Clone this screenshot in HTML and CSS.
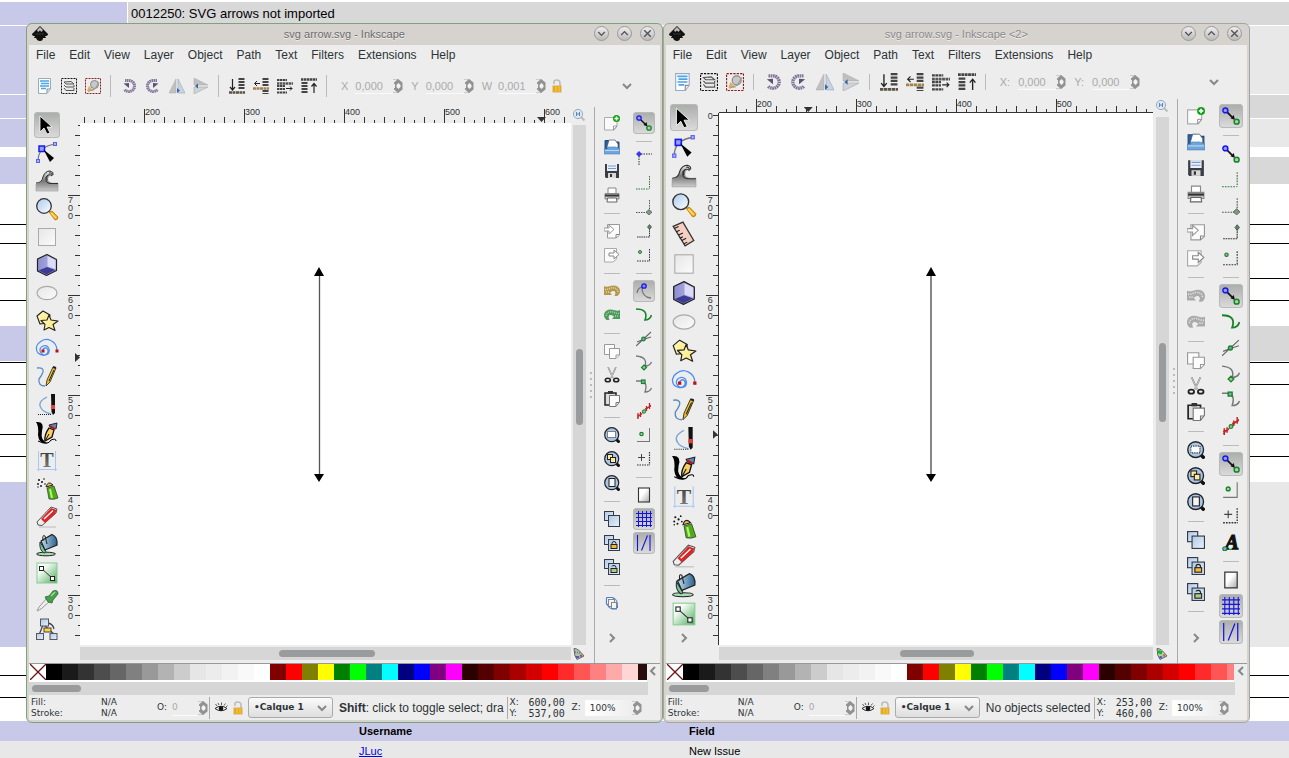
FILE: index.html
```html
<!DOCTYPE html>
<html lang="en">
<head>
<meta charset="utf-8">
<title>svg arrow.svg - Inkscape</title>
<link rel="stylesheet" href="styles.css">
</head>
<body>
<svg class="sprite" aria-hidden="true">
  <defs>
    <linearGradient id="g-paper" x1="0" y1="0" x2="1" y2="1"><stop offset="0" stop-color="#e6e6e6"/><stop offset="1" stop-color="#fbfbfb"/></linearGradient>
    <linearGradient id="g-page" x1="0" y1="0" x2="1" y2="1"><stop offset="0" stop-color="#fff"/><stop offset=".4" stop-color="#fff"/><stop offset="1" stop-color="#aaa"/></linearGradient>
    <linearGradient id="g-lens" x1="0" y1="0" x2="1" y2="1"><stop offset="0" stop-color="#a8c8f0"/><stop offset="1" stop-color="#fff"/></linearGradient>
    <linearGradient id="g-blue" x1="0" y1="0" x2="1" y2="1"><stop offset="0" stop-color="#b0c8e4"/><stop offset="1" stop-color="#e8f2fc"/></linearGradient>
    <linearGradient id="g-green" x1="0" y1="0" x2="1" y2="1"><stop offset="0" stop-color="#fff"/><stop offset=".3" stop-color="#f4fbf4"/><stop offset="1" stop-color="#4cab5c"/></linearGradient>
    <linearGradient id="g-wave" x1="0" y1="0" x2="0" y2="1"><stop offset="0" stop-color="#eee"/><stop offset=".5" stop-color="#777"/><stop offset="1" stop-color="#ccc"/></linearGradient>
    <linearGradient id="g-yellow" x1="0" y1="0" x2="1" y2="1"><stop offset="0" stop-color="#fffbd0"/><stop offset="1" stop-color="#ffe668"/></linearGradient>
    <linearGradient id="g-bucket" x1="0" y1="0" x2="1" y2="0"><stop offset="0" stop-color="#c4dcec"/><stop offset="1" stop-color="#2a6090"/></linearGradient>
    <linearGradient id="g-box" x1="0" y1="0" x2="1" y2="0"><stop offset="0" stop-color="#8e8ed0"/><stop offset="1" stop-color="#b4b4e4"/></linearGradient>
    <linearGradient id="g-T" x1="0" y1="0" x2="0" y2="1"><stop offset="0" stop-color="#333"/><stop offset="1" stop-color="#888"/></linearGradient>
  </defs>

  <symbol id="logo" viewBox="0 0 16 16"><path d="M8 0 L16 8 Q16 10 13 10 L14 12 L11 12 Q11 15 8 15 Q5 15 4 12 L2 12 L3 10 Q0 10 0 8Z" fill="#111"/><path d="M8 1 L11 4 L9.500 6 L8 4.500 L6 6 L5 4Z" fill="#bbb"/><path d="M4 8H12" stroke="#333"/></symbol>

  <symbol id="select" viewBox="0 0 24 24"><path d="M5 3 L5 19 L9 15 L12 21 L15 20 L12 14 L17 14Z" fill="#000" stroke="#fff" stroke-width=".8"/></symbol>
  <symbol id="node" viewBox="0 0 24 24"><path d="M3 20 Q3 5 21 3" fill="none" stroke="#777" stroke-width="1.200"/><g fill="#aab4ff" stroke="#5560ee"><rect x="1.500" y="18.500" width="3" height="3"/><rect x="18.500" y="1.500" width="3" height="3"/></g><rect x="4" y="5" width="5.500" height="5.500" fill="#8fa2ff" stroke="#1a1aee" stroke-width="1.500"/><path d="M8.500 8.500 L19 17 L15 21Z" fill="#000"/></symbol>
  <symbol id="tweak" viewBox="0 0 24 24"><path d="M1 22 V15 Q7 14 8 8 Q10 2 15 2 Q19 3 18 6 Q17 5 15 6 Q11 10 14 13 Q17 15 23 14 V22Z" fill="url(#g-wave)" stroke="#999" stroke-width=".6"/><path d="M1 14 Q7 14 8 8 Q10 2 15 2 Q19 3 18 6 M14 4 Q17 3 17 7 M17 7 Q14 4 11 8 Q10 14 15 14.500 H23 M13 6 Q11 8 12 11" fill="none" stroke="#333" stroke-width="1"/></symbol>
  <symbol id="zoom" viewBox="0 0 24 24"><path d="M14 15 L17 14 L23 20 Q23 23 20 23Z" fill="#f5a800" stroke="#b07010" stroke-width=".7"/><path d="M16 16L21 21" stroke="#ffe49a" stroke-width="1.300"/><circle cx="9" cy="9" r="7.300" fill="url(#g-lens)" stroke="#333" stroke-width="1.300"/></symbol>
  <symbol id="ruler" viewBox="0 0 24 24"><path d="M2 5 L11 1 L21 18 L13 23Z" fill="#f6cfc2" stroke="#333" stroke-width="1.200"/><path d="M3 7l4-2M5 10l3-1.500M7 13l4-2M8 16l3-1.500M10 18l4-2M12 21l3-1.500" stroke="#222"/></symbol>
  <symbol id="rect" viewBox="0 0 24 24"><rect x="3.500" y="3.500" width="17" height="17" fill="url(#g-paper)" stroke="#aaa"/></symbol>
  <symbol id="box3d" viewBox="0 0 24 24"><path d="M2.500 6 L12 1.500 L21.500 6.500 V17.500 L11.500 22.500 L2.500 18Z" fill="url(#g-box)" stroke="#222" stroke-width="1.200" stroke-linejoin="round"/><path d="M12.500 3 L20.500 7.200 V16 L12.500 13.500Z" fill="#dcdcf8"/><path d="M12 14 L20.500 17 L11.500 21.500 L3.500 17.500Z" fill="#3c3c94"/></symbol>
  <symbol id="ellipse" viewBox="0 0 24 24"><ellipse cx="12" cy="12" rx="10" ry="6.600" fill="url(#g-paper)" stroke="#aaa" stroke-width="1.200"/></symbol>
  <symbol id="star" viewBox="0 0 24 24"><g fill="url(#g-yellow)" stroke="#222" stroke-width="1.100" stroke-linejoin="round"><path d="M2 7 L8 2 L15 6 L13 14 L5 15Z"/><path d="M14 6 L16 11 L23 12 L18 15.500 L20 21.500 L14 18.500 L9 21 L10 15.500 L6 11.500 L12 11Z"/></g></symbol>
  <symbol id="spiral" viewBox="0 0 24 24"><path d="M8 14 A2.500 2.500 0 0 1 12.500 12 A4 4 0 0 1 9 18 A5 5 0 0 1 5.500 11 A6 6 0 0 1 8 9 M22 14 A10.500 11 0 0 0 5 5 A9 8 0 0 0 3 16 A8 7 0 0 0 13 17 A6 6 0 0 0 13 10 A5 5 0 0 0 8 9" fill="none" stroke="#4a8cf0" stroke-width="1.200"/><rect x="6.500" y="12.500" width="3" height="3" fill="#c01010"/><rect x="20.500" y="12.500" width="3" height="3" fill="#c01010"/></symbol>
  <symbol id="pencil" viewBox="0 0 24 24"><path d="M2 3 Q9 2 8 7 Q7 10 4 14 Q3 21 10 21" fill="none" stroke="#5a8cc0" stroke-width="1.300"/><path d="M11 21 L12 15 L18 2 L21 3 L15 17Z" fill="#f0c020" stroke="#222" stroke-width=".8"/><path d="M19 5L14 16" stroke="#222" stroke-width="1"/><path d="M18 2L21 3" stroke="#222" stroke-width="2"/></symbol>
  <symbol id="pen" viewBox="0 0 24 24"><path d="M12 4 Q2 9 6 15 Q8 19 16 21" fill="none" stroke="#7aa6d4" stroke-width="1.300"/><path d="M3 21.500H17" stroke="#222" stroke-dasharray="1 1"/><path d="M16 1H20V20L18 22L16.500 19Z" fill="#111"/><rect x="16" y="12" width="4" height="4" fill="#e04040"/></symbol>
  <symbol id="calligraphy" viewBox="0 0 24 24"><path d="M1 1 Q10 0 7 10 Q5 20 13 22 Q4 24 3 14 Q4 5 1 1Z" fill="#000"/><path d="M3 20Q13 25 16 19Q21 17 21 20" fill="none" stroke="#000"/><path d="M14 7 L19 9 L17 16 L10 20 Q9 14 14 7Z" fill="#f8cf60" stroke="#111" stroke-width="1.300"/><path d="M14 4L22 2L21 8L15 6Z" fill="#5a8cb0" stroke="#223"/><path d="M15 5L20 8" stroke="#c01010" stroke-width="2"/><path d="M14 13L10 20" stroke="#111"/></symbol>
  <symbol id="spray" viewBox="0 0 24 24"><g fill="#111"><circle cx="4" cy="3" r="1"/><circle cx="7" cy="5" r="1"/><circle cx="3" cy="7" r=".9"/><circle cx="6" cy="9" r=".9"/><circle cx="9" cy="2" r=".8"/><circle cx="10" cy="7" r=".8"/><circle cx="3" cy="10" r=".7"/></g><path d="M12 11 L19 9 L23 21 Q19 23 14 22Z" fill="#4cae14" stroke="#333" stroke-width=".7"/><path d="M15 12L17 21" stroke="#b8ee7a" stroke-width="2"/><path d="M11 10 Q13 3 18 8Z" fill="#f2c140" stroke="#222"/></symbol>
  <symbol id="eraser" viewBox="0 0 24 24"><path d="M4 22H21" stroke="#bbb"/><path d="M2 17 L16 2 L22 4 L21 8 L7 20.500 L3 20Z" fill="#eee" stroke="#555"/><path d="M6 14 L16 3 L21.500 5 L20 9 L10 18Z" fill="#dc2626"/><path d="M9 14L18 5.500" stroke="#fff" stroke-width="1.300"/></symbol>
  <symbol id="bucket" viewBox="0 0 24 24"><ellipse cx="11" cy="21" rx="9.500" ry="1.800" fill="#a8dcb0" stroke="#222"/><path d="M5 9 Q4 17 9 20 Q12 20 10 17Z" fill="#7cc488" stroke="#234"/><path d="M6 8 L17 1.500 Q23 4 22 12 L10 17Z" fill="url(#g-bucket)" stroke="#222" stroke-width="1.200"/><path d="M8 8 Q7 1 10 3 L12 11" fill="none" stroke="#222"/></symbol>
  <symbol id="gradient" viewBox="0 0 24 24"><rect x="2" y="2" width="20" height="20" fill="url(#g-green)" stroke="#86cc92"/><path d="M6 7L17 17" stroke="#333"/><rect x="4.500" y="5.500" width="4" height="4" fill="#fff" stroke="#222"/><rect x="15.500" y="15.500" width="4" height="4" fill="#fff" stroke="#222"/></symbol>
  <symbol id="dropper" viewBox="0 0 24 24"><path d="M2 22 L4 18 L12 9 L15 12 L6 20Z" fill="#eee" stroke="#999"/><path d="M10 8 L14 7 L18 2 Q23 0 23 5 L18 11 L17 14 L13 13Z" fill="#4c9e4c" stroke="#276a27" stroke-width=".8"/><path d="M16 7L20 3" stroke="#9bdc9b" stroke-width="1.500"/></symbol>
  <symbol id="connector" viewBox="0 0 24 24"><path d="M8 8L4 18M9 8L20 18M13 6Q18 7 19 12" stroke="#444" fill="none" stroke-width="1.300"/><g fill="url(#g-blue)" stroke="#556"><rect x="5.500" y="2" width="8" height="7"/><rect x="1.500" y="16.500" width="7" height="6"/><rect x="15" y="16.500" width="7" height="6"/></g><rect x="9" y="11" width="7" height="4" fill="#ffd33a" stroke="#444"/></symbol>

  <symbol id="new" viewBox="0 0 16 16"><path d="M.500 2.500H13V11L10 15H.500Z" fill="#fafafa" stroke="#aaa"/><path d="M13 11H9.500V15Z" fill="#fff" stroke="#888" stroke-width=".8"/><circle cx="12.500" cy="3.500" r="3.500" fill="#0fa010"/><path d="M12.500 1.500V5.500M10.500 3.500H14.500" stroke="#fff" stroke-width="1.500"/></symbol>
  <symbol id="open" viewBox="0 0 16 16"><path d="M1 1.500H8L9 3H15V14H1Z" fill="#2c629c" stroke="#1c4a80"/><path d="M3 8L5 1H11L14 5V9H3Z" fill="#fff" stroke="#556" stroke-width=".7"/><path d="M0 10H3L4 8H12L13 9H16V15H0Z" fill="#6ea6dc" stroke="#4a80b8" stroke-width=".6"/><path d="M1 11.500H15" stroke="#bcd8f4"/></symbol>
  <symbol id="save" viewBox="0 0 16 16"><path d="M1 1H15V15H2L1 14Z" fill="#3c3c44"/><path d="M3 1H13V8H3Z" fill="#e8f0fa"/><path d="M4 3H12M4 5.500H12" stroke="#7c9cc8"/><rect x="4" y="10" width="8" height="5" fill="#d8d8d8"/><rect x="6" y="11" width="2" height="3" fill="#333"/></symbol>
  <symbol id="print" viewBox="0 0 16 16"><path d="M4 7V1H12V7" fill="#fff" stroke="#888"/><path d="M1 6.500H15V12H1Z" fill="#c8c8c8" stroke="#888"/><path d="M1 7.500H15V9.500H1Z" fill="#333"/><path d="M3.500 11H12.500L13 15H3Z" fill="#fff" stroke="#666"/></symbol>
  <symbol id="import" viewBox="0 0 16 16"><path d="M3.500 1.500H15.500V12L12 15H3.500Z" fill="#fbfbfb" stroke="#999"/><path d="M15 11.500H12V15" fill="none" stroke="#888"/><path d="M0 5H5V2L10 6.500L5 11V8H0Z" fill="#fff" stroke="#999"/></symbol>
  <symbol id="export" viewBox="0 0 16 16"><path d="M.500 1.500H12.500V12L9 15H.500Z" fill="#fbfbfb" stroke="#aaa"/><path d="M5 6H10V3L15 7.500L10 12V9H5Z" fill="#fff" stroke="#888"/></symbol>
  <symbol id="undo" viewBox="0 0 16 16"><path d="M0 3Q2 4.500 6 3Q14 1 16 7Q16.500 11 13.500 13H10.500Q12.500 9 10 8Q8 7.500 6 9.500L8 12H0Z" fill="#b49a50"/><path d="M1 6.500Q4 6.500 7 5Q13 4 14 9M2 9H5" stroke="#e6d8a8" stroke-width="1.500" fill="none" stroke-dasharray="1 1"/></symbol>
  <symbol id="undo-off" viewBox="0 0 16 16"><path d="M0 3Q2 4.500 6 3Q14 1 16 7Q16.500 11 13.500 13H10.500Q12.500 9 10 8Q8 7.500 6 9.500L8 12H0Z" fill="#aaa"/><path d="M1 6.500Q4 6.500 7 5Q13 4 14 9M2 9H5" stroke="#e4e4e4" stroke-width="1.500" fill="none" stroke-dasharray="1 1"/></symbol>
  <symbol id="redo" viewBox="0 0 16 16"><path d="M16 3Q14 4.500 10 3Q2 1 0 7Q-.5 11 2.500 13H5.500Q3.500 9 6 8Q8 7.500 10 9.500L8 12H16Z" fill="#4f9a5c"/><path d="M15 6.500Q12 6.500 9 5Q3 4 2 9M14 9H11" stroke="#a4d4ac" stroke-width="1.500" fill="none" stroke-dasharray="1 1"/></symbol>
  <symbol id="copy" viewBox="0 0 16 16"><g fill="#fcfcfc" stroke="#999"><path d="M.500 1.500H10.500V11.500H.500Z"/><path d="M5.500 5.500H15.500V12L12 15.500H5.500Z"/><path d="M15 12H12V15"/></g></symbol>
  <symbol id="cut" viewBox="0 0 16 16"><path d="M4 0L9 11M12 0L7 11" stroke="#777" stroke-width="1.500"/><path d="M4 0L9 11M12 0L7 11" stroke="#eee" stroke-width=".6"/><g fill="none" stroke="#222" stroke-width="1.600"><ellipse cx="3.800" cy="13" rx="2.500" ry="1.800"/><ellipse cx="12.200" cy="13" rx="2.500" ry="1.800"/></g></symbol>
  <symbol id="paste" viewBox="0 0 16 16"><path d="M1 2H12V14H1Z" fill="#ddd" stroke="#222" stroke-width="1.500"/><rect x="4" y="0" width="5" height="3" fill="#333"/><path d="M5.500 4.500H15.500V11L12 15.500H5.500Z" fill="#fcfcfc" stroke="#777"/><path d="M15 11.500H12V15" fill="none" stroke="#777"/></symbol>
  <symbol id="zoom-sel" viewBox="0 0 16 16"><path d="M12 12L15.500 15.500" stroke="#111" stroke-width="3"/><circle cx="7.700" cy="7.700" r="7" fill="#a9c6e6" stroke="#222" stroke-width="1.200"/><rect x="3.500" y="4.500" width="8" height="6" fill="#fff" stroke="#222" stroke-dasharray="1 1"/></symbol>
  <symbol id="zoom-draw" viewBox="0 0 16 16"><path d="M12 12L15.500 15.500" stroke="#111" stroke-width="3"/><circle cx="7.700" cy="7.700" r="7" fill="#a9c6e6" stroke="#222" stroke-width="1.200"/><g fill="#ffe9a0" stroke="#222"><rect x="3.500" y="3.500" width="5" height="5"/><rect x="6.500" y="6.500" width="5" height="5"/></g></symbol>
  <symbol id="zoom-page" viewBox="0 0 16 16"><path d="M12 12L15.500 15.500" stroke="#111" stroke-width="3"/><circle cx="7.700" cy="7.700" r="7" fill="#a9c6e6" stroke="#222" stroke-width="1.200"/><rect x="5" y="3.500" width="6" height="8" fill="#f4f4f4" stroke="#222"/></symbol>
  <symbol id="dup" viewBox="0 0 16 16"><g fill="url(#g-blue)" stroke="#333c48"><rect x=".5" y=".5" width="9" height="9"/><rect x="4.500" y="4.500" width="11" height="11"/></g></symbol>
  <symbol id="clone" viewBox="0 0 16 16"><g fill="url(#g-blue)" stroke="#333c48"><rect x=".5" y=".5" width="9" height="9"/><rect x="4.500" y="4.500" width="11" height="11"/></g><path d="M8 10V8.500Q8 6.500 10 6.500Q12 6.500 12 8.500V10" fill="none" stroke="#222"/><rect x="7" y="9.500" width="6" height="4" fill="#f5b82e" stroke="#222"/></symbol>
  <symbol id="unlink" viewBox="0 0 16 16"><g fill="url(#g-blue)" stroke="#333c48"><rect x=".5" y=".5" width="9" height="9"/><rect x="4.500" y="4.500" width="11" height="11"/></g><path d="M8 7.500Q8 6.500 10 6.500Q12 6.500 12 8.500V10" fill="none" stroke="#222"/><rect x="7" y="9.500" width="6" height="4" fill="#a8cf80" stroke="#222"/></symbol>
  <symbol id="group" viewBox="0 0 16 16"><g fill="#fff" stroke="#4a7cd0" stroke-width="1.200"><rect x="2.500" y="2.500" width="7" height="7" rx="1"/></g><g fill="#f4f4f4" stroke="#888"><rect x="4.500" y="4.500" width="6" height="7"/><rect x="7.500" y="7.500" width="5" height="6"/></g><path d="M10 3Q14 5 13.500 13M3 9Q4 13 8 14H13" fill="none" stroke="#4a7cd0"/></symbol>

  <symbol id="snap" viewBox="0 0 16 16"><circle cx="3" cy="3" r="2.200" fill="#9c9cff" stroke="#1616ee" stroke-width="1.300"/><path d="M5 5L9 9" stroke="#111" stroke-width="1.500"/><path d="M11.500 11.500L7.500 10L10.500 7Z" fill="#111"/><circle cx="13" cy="13" r="2.200" fill="#a8d0b0" stroke="#168424" stroke-width="1.300"/></symbol>
  <symbol id="s-bbox" viewBox="0 0 16 16"><path d="M3 5V15M5 3H16" stroke="#333" stroke-dasharray="1.500 1"/><path d="M3 0L6 3L3 6L0 3Z" fill="#3838ee"/></symbol>
  <symbol id="s-edge" viewBox="0 0 16 16"><path d="M13.500 1V14M0 14H13" stroke="#2f7838" stroke-dasharray="1.500 1"/></symbol>
  <symbol id="s-corner" viewBox="0 0 16 16"><path d="M13.500 1V12M0 13.500H12" stroke="#555" stroke-dasharray="1.500 1"/><path d="M13 10.500L16 13.200L13 16L10 13.200Z" fill="#7c9c80" stroke="#444" stroke-width=".6"/></symbol>
  <symbol id="s-mid" viewBox="0 0 16 16"><path d="M13.500 3V14M1 14H14" stroke="#333" stroke-dasharray="1.500 .7"/><path d="M13.500 1.500L15.500 4L13.500 6.500L11.500 4Z" fill="#5c8a62" stroke="#333" stroke-width=".6"/></symbol>
  <symbol id="s-center" viewBox="0 0 16 16"><path d="M13.500 2V14M1 14H14" stroke="#333" stroke-dasharray="1.500 1"/><circle cx="4" cy="5" r="1.500" fill="#8fc898" stroke="#2b7036"/></symbol>
  <symbol id="s-nodes" viewBox="0 0 16 16"><path d="M1 10Q2 4 7 4M6 5Q6 14 15 15" fill="none" stroke="#777" stroke-width="1.300"/><circle cx="8" cy="3" r="2.200" fill="#8c8cff" stroke="#1616ee" stroke-width="1.300"/></symbol>
  <symbol id="s-path" viewBox="0 0 16 16"><path d="M0 2Q13 2 9 13Q14 13 15.500 8" fill="none" stroke="#168424" stroke-width="1.600"/></symbol>
  <symbol id="s-cross" viewBox="0 0 16 16"><path d="M0 15L15 1M1 11Q8 8 15 6" fill="none" stroke="#666" stroke-width="1.100"/><circle cx="7.500" cy="8" r="1.800" fill="#7c9cc0" stroke="#168424" stroke-width="1.200"/></symbol>
  <symbol id="s-cusp" viewBox="0 0 16 16"><path d="M0 1Q12 2 9 11Q14 11 15.500 7" fill="none" stroke="#777" stroke-width="1.300"/><path d="M8 10L10.500 12.500L8 15L5.500 12.500Z" fill="#9cc8a8" stroke="#168424" stroke-width="1.200"/></symbol>
  <symbol id="s-smooth" viewBox="0 0 16 16"><path d="M0 2H6Q12 4 9 13Q14 13 15.500 9" fill="none" stroke="#777" stroke-width="1.300"/><rect x="5.500" y="1" width="3.500" height="3.500" fill="#7cb0b0" stroke="#168424" stroke-width="1.200"/></symbol>
  <symbol id="s-line" viewBox="0 0 16 16"><path d="M1 15L15 2" stroke="#666"/><path d="M2 10V16M4.500 9V14M1 13L6 11M10.500 3V8M13.500 0V6M9 6L15 3" stroke="#c82020" stroke-width="1.300"/><circle cx="8" cy="8.500" r="1.700" fill="#8cc094" stroke="#168424"/></symbol>
  <symbol id="s-objmid" viewBox="0 0 16 16"><path d="M13.500 1V14.500M1 14.500H14" stroke="#777"/><circle cx="5.500" cy="7" r="1.700" fill="#a8d8ae" stroke="#168424" stroke-width="1.200"/></symbol>
  <symbol id="s-rot" viewBox="0 0 16 16"><path d="M13.500 1V14M1 14H14" stroke="#333" stroke-dasharray="1.500 1" stroke-width="1.200"/><path d="M5.500 3V10M2 6.500H9" stroke="#444"/></symbol>
  <symbol id="s-page" viewBox="0 0 16 16"><rect x="2.500" y="1" width="11" height="14" fill="url(#g-page)" stroke="#333" stroke-width="1.100"/></symbol>
  <symbol id="s-grid" viewBox="0 0 16 16"><path d="M2.500 0V16M6.500 0V16M10.500 0V16M14.500 0V16M0 2.500H16M0 6.500H16M0 10.500H16M0 14.500H16" stroke="#1414e0"/></symbol>
  <symbol id="s-guide" viewBox="0 0 16 16"><path d="M1.500 0V16M14 0V16M5.500 15.500L11.500 .5" stroke="#1414e0" stroke-width="1.100"/></symbol>

  <symbol id="all" viewBox="0 0 16 16"><path d="M1.500 .5H13.500V11L10 15.500H1.500Z" fill="#fff" stroke="#9ab"/><path d="M3 3H12M4 5.500H12M3 8H12M4 10.500H9" stroke="#4aa4e8" stroke-width="1.500"/><path d="M13 11H10V15" fill="#eee" stroke="#888"/></symbol>
  <symbol id="layers" viewBox="0 0 16 16"><rect x=".5" y=".5" width="15" height="15" fill="none" stroke="#111" stroke-dasharray="2 1"/><path d="M3 4L10 3.500L13 6H5ZM3 7L5 9H13V7M3 10L5 12.500H13V10" fill="#e8e8e8" stroke="#555"/></symbol>
  <symbol id="desel" viewBox="0 0 16 16"><rect x=".5" y=".5" width="15" height="15" fill="none" stroke="#8c1c1c" stroke-dasharray="2 1"/><path d="M2 13L4 8L9 13Z" fill="#dcb060"/><circle cx="9.500" cy="6.500" r="4" fill="#c8c8c8" stroke="#888"/><path d="M3 13.500L10 11L14 4" fill="none" stroke="#999"/></symbol>
  <symbol id="rot-l" viewBox="0 0 16 16"><path d="M4 2.500H8A5 5 0 0 1 8 13.500Q5 13.500 3.500 11.500" fill="none" stroke="#80769a" stroke-width="3" stroke-dasharray="1.500 .5"/><path d="M2.500 5.500L8 5L8 10Z" fill="#5c5270"/></symbol>
  <symbol id="rot-r" viewBox="0 0 16 16"><path d="M12 2.500H8A5 5 0 0 0 8 13.500Q11 13.500 12.500 11.500" fill="none" stroke="#80769a" stroke-width="3" stroke-dasharray="1.500 .5"/><path d="M13.500 5.500L8 5L8 10Z" fill="#5c5270"/></symbol>
  <symbol id="flip-h" viewBox="0 0 16 16"><path d="M7 1V15H0Z" fill="#c0c0c0" stroke="#aaa" stroke-width=".5"/><path d="M9 1V15H16Z" fill="#c8d4e0" stroke="#9ab" stroke-width=".6"/><path d="M8 10L11 12.500L8 15Z" fill="#3468a8"/></symbol>
  <symbol id="flip-v" viewBox="0 0 16 16"><path d="M1 0V7H15Z" fill="#c0c0c0" stroke="#aaa" stroke-width=".5"/><path d="M1 16V9H15Z" fill="#d0d4d8" stroke="#aaa" stroke-width=".6"/><path d="M2 8L5 5.500V10.500Z" fill="#3468a8"/></symbol>
  <symbol id="bottom" viewBox="0 0 16 16"><path d="M3.500 1V11M1 9L3.500 12L6 9" fill="none" stroke="#222" stroke-width="1.200"/><path d="M12.500 0V12" stroke="#444" stroke-width="6" stroke-dasharray="2 1"/><path d="M0 14.500H16" stroke="#5c5444" stroke-width="2.500" stroke-dasharray="3 .5"/></symbol>
  <symbol id="lower" viewBox="0 0 16 16"><path d="M7 5.500H2M4 3L1.500 5.500L4 8" fill="none" stroke="#222"/><path d="M12.500 0V9M12.500 12V16" stroke="#444" stroke-width="6" stroke-dasharray="2 1"/><path d="M0 10.500H16" stroke="#a08450" stroke-width="2.500" stroke-dasharray="3 .5"/></symbol>
  <symbol id="raise" viewBox="0 0 16 16"><path d="M0 2H10M0 8H8M0 11H8M0 14.500H10" stroke="#444" stroke-width="2" stroke-dasharray="2.500 .5"/><path d="M0 5.500H16" stroke="#555" stroke-width="2.500" stroke-dasharray="2.500 .5"/><path d="M9 10.500H15M13 8.500L15 10.500L13 12.500" fill="none" stroke="#222"/></symbol>
  <symbol id="top" viewBox="0 0 16 16"><path d="M0 1.500H16" stroke="#444" stroke-width="2.500" stroke-dasharray="2.500 .5"/><path d="M3.500 4V16" stroke="#444" stroke-width="6" stroke-dasharray="2 1"/><path d="M13 15V6M10.500 8.500L13 5.500L15.500 8.500" fill="none" stroke="#222" stroke-width="1.200"/></symbol>
  <symbol id="lock" viewBox="0 0 12 14"><path d="M3 5V3Q3 1 5.500 1Q9 1 9 4V7" fill="none" stroke="#bbb" stroke-width="1.600"/><rect x="2" y="7" width="8" height="6" fill="#e8a810" stroke="#d8b050"/><path d="M5 7.500V12.500M8 7.500V12.500" stroke="#f8d060"/></symbol>
  <symbol id="eye" viewBox="0 0 14 12"><path d="M1 6.500Q7 2 13 6.500Q7 11 1 6.500Z" fill="#fff" stroke="#222"/><circle cx="7" cy="6.500" r="2.300" fill="#111"/><path d="M3 4L1.500 2M5 3L4 1M7.500 3V.5M10 3.500L11.500 1.500M12 5L13.500 3.500" stroke="#333" stroke-width=".8"/></symbol>
  <symbol id="spin" viewBox="0 0 10 16"><path d="M0 1.500H6M0 14.500H6" stroke="#ccc"/><path d="M5 1L9.500 4.500V11.500L5 15L1 11.500V10H2V6H1V4.500Z" fill="#929292"/><path d="M5.500 5L7.500 7V9L5.500 11L3.500 9V7Z" fill="#f4f4f4"/></symbol>
  <symbol id="one" viewBox="0 0 14 14"><path d="M9 9L12.500 12.500" stroke="#bbb" stroke-width="2"/><circle cx="6" cy="6" r="4.600" fill="#dce8f6" stroke="#9aa8b8"/><path d="M4.500 4V8M7.500 4V8M4.500 6H7.500" stroke="#5c84b4"/></symbol>
  <symbol id="cms" viewBox="0 0 12 12"><path d="M1 0.500Q5 0 11 8L4 11.500Q1 8 1 .5Z" fill="#b4beb4" stroke="#666"/><path d="M2 4L7 5" stroke="#5c9c5c" stroke-width="2" stroke-dasharray="1 1"/><path d="M3 9L6 9" stroke="#5858bc" stroke-width="2"/><path d="M7 7.500L9 8" stroke="#b84848" stroke-width="2"/></symbol>
  <symbol id="cms-on" viewBox="0 0 12 12"><path d="M1 0.500Q5 0 11 8L4 11.500Q1 8 1 .5Z" fill="#a8d8a8" stroke="#666"/><path d="M2 3.500L6 5" stroke="#20b020" stroke-width="3"/><path d="M3.500 9L6 9.500" stroke="#4848e8" stroke-width="2"/><path d="M7 7L9 8" stroke="#f05050" stroke-width="2"/></symbol>
  <symbol id="c-down" viewBox="0 0 12 12"><path d="M2 4L6 8L10 4" fill="none" stroke="#888" stroke-width="2"/></symbol>
  <symbol id="c-right" viewBox="0 0 12 12"><path d="M4 2L8 6L4 10" fill="none" stroke="#888" stroke-width="2"/></symbol>
  <symbol id="c-left" viewBox="0 0 12 12"><path d="M8 2L4 6L8 10" fill="none" stroke="#888" stroke-width="2"/></symbol>
  <symbol id="w-min" viewBox="0 0 16 16"><path d="M4.500 6.500L8 10L11.500 6.500" fill="none" stroke="#555" stroke-width="1.500"/></symbol>
  <symbol id="w-max" viewBox="0 0 16 16"><path d="M4.500 9.500L8 6L11.500 9.500" fill="none" stroke="#555" stroke-width="1.500"/></symbol>
  <symbol id="w-close" viewBox="0 0 16 16"><path d="M4.500 4.500L11.500 11.500M11.500 4.500L4.500 11.500" stroke="#555" stroke-width="1.500"/></symbol>
  <symbol id="none" viewBox="0 0 16 16"><path d="M0 0L16 16M16 0L0 16" stroke="#6c1010" stroke-width="1.300"/></symbol>
</svg>
<svg hidden class="lettersprite" aria-hidden="true">
  <symbol id="text" viewBox="0 0 24 24"><path d="M3.500 2V22M20.500 2V22M2 20.500H22" stroke="#a8c8f4" fill="none"/><text x="12" y="18" text-anchor="middle" font-family="Liberation Serif, serif" font-weight="bold" font-size="20" fill="url(#g-T)">T</text></symbol>
  <symbol id="s-text" viewBox="0 0 16 16"><path d="M3 14.500H15" stroke="#168424"/><text x="9" y="14" text-anchor="middle" font-family="Liberation Serif, serif" font-weight="bold" font-style="italic" font-size="18" stroke="#111" stroke-width="1" fill="#111">A</text><circle cx="2.500" cy="14" r="1.800" fill="#8c9cff" stroke="#168424"/></symbol>
</svg>

<main class="tracker">
  <div class="row dark summary"><span class="label"></span><span class="value">0012250: SVG arrows not imported</span></div>
  <div class="row light description"><span class="label"></span><span class="value"></span></div>
  <div class="row dark"><span class="label"></span><span class="value"></span></div>
  <div class="row light attached"><span class="label"></span><span class="value"></span></div>
  <div class="row dark relations"><span class="label"></span><span class="value"></span></div>
  <div class="rules first"><hr><hr><hr><hr></div>
  <div class="row dark notes"><span class="label"></span><span class="value"></span></div>
  <div class="rules second"><hr><hr><hr><hr></div>
  <div class="row light comment"><span class="label"></span><span class="value"></span></div>
  <div class="rules third"><hr><hr></div>
  <table class="history">
    <tr><th></th><th>Username</th><th>Field</th></tr>
    <tr><td></td><td><a href="#">JLuc</a></td><td>New Issue</td></tr>
  </table>
</main>

<div class="desktop">
  <section class="window active">
    <header class="titlebar"><svg class="logo"><use href="#logo"/></svg><h1>svg arrow.svg - Inkscape</h1><div class="winbuttons" data-icons="w-min w-max w-close"></div></header>
    <div class="client">
      <nav class="menubar"><button>File</button><button>Edit</button><button>View</button><button>Layer</button><button>Object</button><button>Path</button><button>Text</button><button>Filters</button><button>Extensions</button><button>Help</button></nav>
      <div class="toolbar">
        <div class="icons" data-icons="all layers desel | rot-l rot-r flip-h flip-v | bottom lower raise top |"></div>
        <label class="num">X<input value="0,000" disabled><svg><use href="#spin"/></svg></label>
        <label class="num">Y<input value="0,000" disabled><svg><use href="#spin"/></svg></label>
        <label class="num wide">W<input value="0,001" disabled><svg><use href="#spin"/></svg></label>
        <button class="lock" aria-label="Lock ratio"><svg><use href="#lock"/></svg></button>
        <button class="more" aria-label="More"><svg><use href="#c-down"/></svg></button>
      </div>
      <div class="work">
        <div class="toolbox"><div class="tools" data-icons="*select node tweak zoom rect box3d ellipse star spiral pencil pen calligraphy text spray eraser bucket gradient dropper connector"></div></div>
        <div class="stage">
          <div class="hruler"><span>200</span><span>300</span><span>400</span><span>500</span><span>600</span><i></i></div>
          <svg class="one"><use href="#one"/></svg>
          <div class="vruler"><span>700</span><span>600</span><span>500</span><span>400</span><span>300</span><i></i></div>
          <svg class="canvas"><path d="M239.500 150V355" stroke="#555" stroke-width="1.300"/><path d="M239 144L244 153H234ZM239 359L234 351H244Z"/></svg>
          <div class="vscroll"><div class="thumb"></div></div>
          <div class="hscroll"><div class="thumb"></div></div>
          <svg class="cms"><use href="#cms"/></svg>
        </div>
        <div class="grip"></div>
        <div class="commands"><div data-icons="new open save print | import export | undo redo | copy cut paste | zoom-sel zoom-draw zoom-page | dup clone unlink | group"></div><button class="more" aria-label="More"><svg><use href="#c-right"/></svg></button></div>
        <div class="snapbar" data-icons="*snap | s-bbox s-edge s-corner s-mid s-center | *s-nodes s-path s-cross s-cusp s-smooth s-line s-objmid s-rot | s-page *s-grid *s-guide"></div>
      </div>
      <div class="palette"><div class="swatches"></div><button class="more" aria-label="Palette"><svg><use href="#c-left"/></svg></button></div>
      <div class="palscroll"><div class="thumb"></div></div>
      <footer class="status">
        <dl><dt>Fill:</dt><dd>N/A</dd><dt>Stroke:</dt><dd>N/A</dd></dl>
        <label class="opacity">O:<input value="0" disabled><svg><use href="#spin"/></svg></label>
        <button class="layerbtn" aria-label="Toggle layer visibility"><svg class="eye"><use href="#eye"/></svg></button>
        <button class="layerbtn" aria-label="Lock layer"><svg class="padlock"><use href="#lock"/></svg></button>
        <div class="picker"><select aria-label="Layer"><option>•Calque 1</option></select><svg><use href="#c-down"/></svg></div>
        <p><b>Shift</b>: click to toggle select; dra</p>
        <dl class="coords"><dt>X:</dt><dd>600,00</dd><dt>Y:</dt><dd>537,00</dd></dl>
        <label class="zoomfield">Z:<input value="100%"><svg><use href="#spin"/></svg></label>
      </footer>
    </div>
  </section>

  <section class="window second">
    <header class="titlebar"><svg class="logo"><use href="#logo"/></svg><h1>svg arrow.svg - Inkscape &lt;2&gt;</h1><div class="winbuttons" data-icons="w-min w-max w-close"></div></header>
    <div class="client">
      <nav class="menubar"><button>File</button><button>Edit</button><button>View</button><button>Layer</button><button>Object</button><button>Path</button><button>Text</button><button>Filters</button><button>Extensions</button><button>Help</button></nav>
      <div class="toolbar">
        <div class="icons" data-icons="all layers desel | rot-l rot-r flip-h flip-v | bottom lower raise top |"></div>
        <label class="num">X:<input value="0,000" disabled><svg><use href="#spin"/></svg></label>
        <label class="num">Y:<input value="0,000" disabled><svg><use href="#spin"/></svg></label>
        <button class="more" aria-label="More"><svg><use href="#c-down"/></svg></button>
      </div>
      <div class="work">
        <div class="toolbox"><div class="tools" data-icons="*select node tweak zoom ruler rect box3d ellipse star spiral pencil pen calligraphy text spray eraser bucket gradient"></div><button class="more" aria-label="More"><svg><use href="#c-right"/></svg></button></div>
        <div class="stage">
          <div class="hruler"><span>200</span><span>300</span><span>400</span><span>500</span><i></i></div>
          <svg class="one"><use href="#one"/></svg>
          <div class="vruler"><span class="short">0</span><span>700</span><span>600</span><span>500</span><span>400</span><span>300</span><i></i></div>
          <svg class="canvas"><path d="M212 160V365" stroke="#444" stroke-width="1.300"/><path d="M212 154L217 163H207ZM212 369L207 361H217Z"/></svg>
          <div class="vscroll"><div class="thumb"></div></div>
          <div class="hscroll"><div class="thumb"></div></div>
          <svg class="cms"><use href="#cms-on"/></svg>
        </div>
        <div class="grip"></div>
        <div class="commands"><div data-icons="new open save print | import export | undo-off undo-off~ | copy cut paste | zoom-sel zoom-draw zoom-page | dup clone unlink |"></div><button class="more" aria-label="More"><svg><use href="#c-right"/></svg></button></div>
        <div class="snapbar" data-icons="*snap | snap s-edge s-corner s-mid s-center | *snap s-path s-cross s-cusp s-smooth s-line | *snap s-objmid s-rot s-text | s-page *s-grid *s-guide"></div>
      </div>
      <div class="palette"><div class="swatches"></div><button class="more" aria-label="Palette"><svg><use href="#c-left"/></svg></button></div>
      <div class="palscroll"><div class="thumb"></div></div>
      <footer class="status">
        <dl><dt>Fill:</dt><dd>N/A</dd><dt>Stroke:</dt><dd>N/A</dd></dl>
        <label class="opacity">O:<input value="0" disabled><svg><use href="#spin"/></svg></label>
        <button class="layerbtn" aria-label="Toggle layer visibility"><svg class="eye"><use href="#eye"/></svg></button>
        <button class="layerbtn" aria-label="Lock layer"><svg class="padlock"><use href="#lock"/></svg></button>
        <div class="picker"><select aria-label="Layer"><option>•Calque 1</option></select><svg><use href="#c-down"/></svg></div>
        <p>No objects selected</p>
        <dl class="coords"><dt>X:</dt><dd>253,00</dd><dt>Y:</dt><dd>460,00</dd></dl>
        <label class="zoomfield">Z:<input value="100%"><svg><use href="#spin"/></svg></label>
      </footer>
    </div>
  </section>
</div>
<script src="app.js"></script>
</body>
</html>
```

FILE: styles.css
```css
* { box-sizing: border-box; }
body { margin: 0; height: 100vh; position: relative; background: #fff; overflow: hidden; font: 12px/16px "Liberation Sans", Arial, sans-serif; color: #000; }
button, input, select { font: inherit; color: inherit; margin: 0; padding: 0; border: 0; background: none; }
svg { display: block; flex: none; }
dl, dd, p, h1 { margin: 0; }
.sprite { position: absolute; width: 0; height: 0; }
.lettersprite { display: none; }

/* bug tracker page */
.tracker { display: flex; flex-direction: column; min-height: 100vh; padding-top: 2px; }
.row { display: flex; gap: 1px; height: 23px; margin-bottom: 1px; flex: none; }
.row .label { flex: 0 0 127px; background: #c8c8e8; }
.row .value { flex: 1; padding-left: 3px; line-height: 23px; font-size: 13px; }
.dark .value { background: #d8d8d8; }
.light .value { background: #e8e8e8; }
.description { height: 68px; }
.attached { height: 28px; margin-bottom: 10px; }
.relations { height: 27px; margin-bottom: 0; }
.notes { height: 35px; margin-bottom: 0; }
.comment { height: 165px; margin-bottom: 0; }
.rules { flex: none; }
.rules hr { margin: 0; border: 0; border-bottom: 1px solid #000; height: 22px; }
.rules.first { padding-bottom: 25px; }
.rules.first hr:nth-child(1) { height: 41px; }
.rules.first hr:nth-child(2) { height: 19px; }
.rules.first hr:nth-child(3) { height: 35px; }
.rules.second { padding-bottom: 25px; }
.rules.second hr:nth-child(1) { height: 2px; }
.rules.second hr:nth-child(3) { height: 50px; }
.rules.third { padding-bottom: 23px; }
.rules.third hr:nth-child(1) { height: 29px; }
.history { border-collapse: collapse; width: 100%; table-layout: fixed; font-size: 11px; }
.history th, .history td { padding: 0; text-align: left; height: 20px; }
.history th { background: #c8c8e8; }
.history td { background: #e8e8e8; }
.history th:nth-child(1) { width: 359px; }
.history th:nth-child(2) { width: 330px; }
.history a { color: #00e; }

/* windows */
.desktop { position: absolute; inset: 23px 39px 35px 26px; display: flex; }
.window { flex: 637 1 0; min-width: 0; display: flex; flex-direction: column; background: #d6d2ce; border: 1px solid #80a37c; border-radius: 6px; padding: 0 2px 2px; color: #2e3436; }
.window.second { flex-grow: 587; border-color: #a8a4a1; }
.titlebar { height: 21px; flex: none; display: flex; align-items: center; padding: 0 5px 2px 3px; }
.titlebar h1 { flex: 1; padding-left: 47px; text-align: center; font-size: 11px; font-weight: normal; color: #6c6c6c; text-shadow: 0 1px #eee; }
.second .titlebar h1 { color: #8a8a8a; }
.logo { width: 16px; height: 16px; }
.winbuttons { display: flex; gap: 8px; }
.winbuttons button { width: 15px; height: 15px; border-radius: 50%; border: 1px solid #999; background: linear-gradient(#eee, #bbb); display: grid; place-content: center; }
.winbuttons svg { width: 15px; height: 15px; }
.client { flex: 1; min-height: 0; display: flex; flex-direction: column; background: #ededed; }
.menubar { display: flex; gap: 14px; padding: 0 7px; height: 20px; flex: none; }
.toolbar { display: flex; align-items: center; height: 42px; flex: none; padding-left: 4px; color: #aaa; font-size: 11px; }
.second .toolbar { height: 34px; }
.icons { display: flex; align-items: center; }
.icons button { width: 24px; height: 24px; display: grid; place-items: center; }
.icons svg { width: 16px; height: 16px; }
.second .icons button { width: 26px; }
.second .icons svg { width: 18px; height: 18px; }
.icons .sep { width: 12px; height: 22px; background: linear-gradient(#bbb, #bbb) 5px 0 / 1px 100% no-repeat; }
.second .icons .sep { height: 16px; }
.num { display: flex; align-items: center; padding-left: 8px; }
.num input { width: 38px; margin-left: 7px; height: 16px; border-bottom: 1px solid #fafafa; }
.num svg { width: 10px; height: 16px; }
.num.wide input { margin-left: 6px; }
.second .num input { margin-left: 8px; }
.lock { margin-left: 5px; }
.lock svg { width: 12px; height: 14px; }
.more { display: grid; place-items: center; }
.more svg { width: 12px; height: 12px; }
.toolbar .more { margin-left: auto; margin-right: 27px; }

/* work area */
.work { flex: 1; min-height: 0; display: flex; }
.toolbox { width: 36px; flex: none; display: flex; flex-direction: column; padding: 4px 0 20px; }
.tools { flex: 1; min-height: 0; display: flex; flex-direction: column; align-items: center; }
.tools button { flex: 1 1 0; min-height: 0; width: 26px; margin: 1px 0; display: grid; place-content: center; }
.tools svg { width: 24px; height: 24px; }
.second .toolbox { padding-bottom: 16px; }
.second .tools button { width: 28px; }
.second .tools svg { width: 26px; height: 26px; }
.toolbox .more { height: 18px; }
.on { border-radius: 4px; box-shadow: inset 0 0 0 1px #b8bab8; background: linear-gradient(#a9aca9, #dcdcdc); }
.stage { flex: 1; min-width: 0; display: grid; grid-template: 16px 1fr 18px / 15px 1fr 17px; --x: 64px; --y: 72px; }
.second .stage { grid-template: 14px 1fr 18px / 17px 1fr 18px; --x: 37px; --y: 82px; }
.hruler, .vruler { position: relative; overflow: hidden; font-size: 9px; line-height: 8px; }
.hruler { grid-area: 1 / 2; display: flex; padding-left: var(--x);
  background:
    linear-gradient(90deg, #333 1px, transparent 1px) var(--x) 100% / 100px 14px repeat-x,
    linear-gradient(90deg, #333 1px, transparent 1px) var(--x) 100% / 20px 6px repeat-x,
    linear-gradient(90deg, #333 1px, transparent 1px) var(--x) 100% / 10px 3px repeat-x; }
.hruler span { flex: 0 0 100px; padding: 1px 0 0 1px; }
.vruler { grid-area: 2 / 1; padding-top: var(--y);
  background:
    linear-gradient(#333 1px, transparent 1px) 100% var(--y) / 12px 100px repeat-y,
    linear-gradient(#333 1px, transparent 1px) 100% var(--y) / 5px 20px repeat-y,
    linear-gradient(#333 1px, transparent 1px) 100% var(--y) / 2px 10px repeat-y; }
.vruler span { display: block; height: 100px; width: 6px; margin-left: 3px; padding-top: 1px; word-break: break-all; }
.second .hruler { border-bottom: 1px solid #333; }
.second .vruler { border-right: 1px solid #333; padding-top: 0; }
.second .vruler span { margin-left: 6px; }
.second .vruler .short { height: 82px; padding: 0; line-height: 6px; }
.hruler i, .vruler i { position: absolute; width: 9px; height: 5px; background: #333; clip-path: polygon(0 0, 100% 0, 50% 100%); }
.hruler i { bottom: 1px; left: 457px; }
.vruler i { width: 5px; height: 9px; right: 0; top: 230px; clip-path: polygon(0 0, 100% 50%, 0 100%); }
.second .hruler i { left: 85px; bottom: 0; }
.second .vruler i { top: 317px; }
.one { grid-area: 1 / 3; width: 14px; height: 14px; align-self: center; justify-self: center; }
.canvas { grid-area: 2 / 2; width: 100%; height: 100%; background: #fff; min-height: 0; }
.vscroll { grid-area: 2 / 3; margin: 2px 2px 0; background: #d6d6d6; padding: 224px 3px 0; }
.vscroll .thumb { height: 76px; }
.thumb { background: #999b9c; border-radius: 4px; }
.second .vscroll { margin: 4px 2px 0 3px; padding-top: 226px; }
.second .vscroll .thumb { height: 79px; }
.hscroll { grid-area: 3 / 2; margin: 2px 0 3px; background: #d6d6d6; padding: 3px 0 3px 199px; }
.hscroll .thumb { width: 96px; height: 7px; }
.second .hscroll { padding-left: 181px; }
.second .hscroll .thumb { width: 74px; }
.cms { grid-area: 3 / 3; width: 12px; height: 12px; align-self: center; justify-self: center; }
.grip { width: 6px; flex: none; background: radial-gradient(circle, #bbb 1px, transparent 1px) 1px 50% / 4px 6px repeat-y; align-self: center; height: 26px; }
.commands { border-left: 1px solid #aaa; width: 35px; flex: none; padding: 4px 0 16px; display: flex; flex-direction: column; }
.snapbar { width: 31px; flex: none; padding-top: 4px; }
.commands > div, .snapbar { display: flex; flex-direction: column; align-items: center; }
.commands > div button, .snapbar button { width: 22px; height: 22px; margin: 1px 0; display: grid; place-items: center; }
.commands > div svg, .snapbar svg { width: 16px; height: 16px; }
.commands .sep, .snapbar .sep { width: 16px; height: 12px; background: linear-gradient(#bbb, #bbb) 0 6px / 100% 1px no-repeat; }
.commands .more { margin-top: auto; height: 18px; }
.second .commands { width: 37px; }
.second .snapbar { width: 33px; }
.second .commands > div button, .second .snapbar button { width: 24px; height: 24px; }
.second .commands > div svg, .second .snapbar svg { width: 18px; height: 18px; }
.flip { transform: scaleX(-1); }

/* palette and status bar */
.palette { display: flex; border-top: 1px solid #999; height: 19px; flex: none; }
.swatches { flex: 1; min-width: 0; overflow: hidden; display: flex; height: 18px; padding: 0 0 2px 1px; background: #fff; }
.swatches button { flex: 0 0 16px; }
.swatches svg { width: 16px; height: 16px; }
.palette .more { width: 13px; height: 13px; }
.palscroll { height: 13px; flex: none; background: #d6d6d6; margin-right: 12px; padding: 3px; }
.palscroll .thumb { width: 49px; height: 7px; }
.second .palscroll .thumb { width: 40px; }
.status { display: flex; align-items: center; height: 25px; flex: none; padding-left: 2px; font: 9px/11px "DejaVu Sans", sans-serif; }
.status dl { display: grid; grid-template-columns: 70px 56px; flex: none; }
.opacity, .zoomfield { display: flex; align-items: center; flex: none; }
.opacity input { width: 26px; margin-left: 5px; height: 16px; color: #aaa; border-bottom: 1px solid #fafafa; }
.second .opacity input { width: 36px; }
.status label svg { width: 10px; height: 16px; }
.opacity { border-right: 1px solid #aaa; height: 22px; padding-right: 1px; margin-right: 4px; }
.layerbtn { flex: none; margin-right: 4px; }
.eye { width: 14px; height: 12px; }
.padlock { width: 12px; height: 14px; }
.picker { flex: none; display: grid; align-items: center; }
.picker select { grid-area: 1 / 1; appearance: none; width: 85px; height: 21px; border: 1px solid #aaa; border-radius: 3px; padding-left: 5px; font-weight: bold; background: linear-gradient(#fafafa, #dedede); }
.picker svg { grid-area: 1 / 1; justify-self: end; margin-right: 5px; width: 12px; height: 12px; pointer-events: none; }
.status p { flex: 1; min-width: 0; overflow: hidden; white-space: nowrap; padding-left: 6px; font: 12px/16px "Liberation Sans", sans-serif; }
.status .coords { grid-template-columns: 19px 43px; border-left: 1px solid #aaa; padding-left: 2px; }
.coords dd { font-family: "DejaVu Sans Mono", monospace; font-size: 10px; }
.zoomfield { padding-right: 18px; }
.zoomfield input { width: 47px; height: 16px; margin-left: 4px; padding-left: 5px; background: linear-gradient(90deg, #fff, #eee); }
```

FILE: app.js
```js
const svg = id => `<svg><use href="#${id}"/></svg>`;

// "*" marks a pressed toggle, "|" a separator, "~" a mirrored icon
document.querySelectorAll('[data-icons]').forEach(bar => {
  bar.innerHTML = bar.dataset.icons.split(' ').map(name => {
    if (name === '|') return '<span class="sep"></span>';
    const id = name.replace(/[*~]/g, '');
    const cls = (name[0] === '*' ? 'on ' : '') + (name.endsWith('~') ? 'flip' : '');
    return `<button class="${cls}" aria-label="${id}">${svg(id)}</button>`;
  }).join('');
});

const colors = ('000 1a1a1a 333 4d4d4d 666 808080 999 b3b3b3 ccc e6e6e6 ececec f2f2f2 f9f9f9 fff ' +
  '800000 f00 808000 ff0 008000 0f0 008080 0ff 000080 00f 800080 f0f ' +
  '2b0000 500 800000 a00 d40000 f00 ff2a2a f55 ff8080 faa ffd5d5 280b0b').split(' ');
document.querySelectorAll('.swatches').forEach(row => {
  row.innerHTML = `<button aria-label="none">${svg('none')}</button>` +
    colors.map(c => `<button aria-label="#${c}" style="background:#${c}"></button>`).join('');
});
```
